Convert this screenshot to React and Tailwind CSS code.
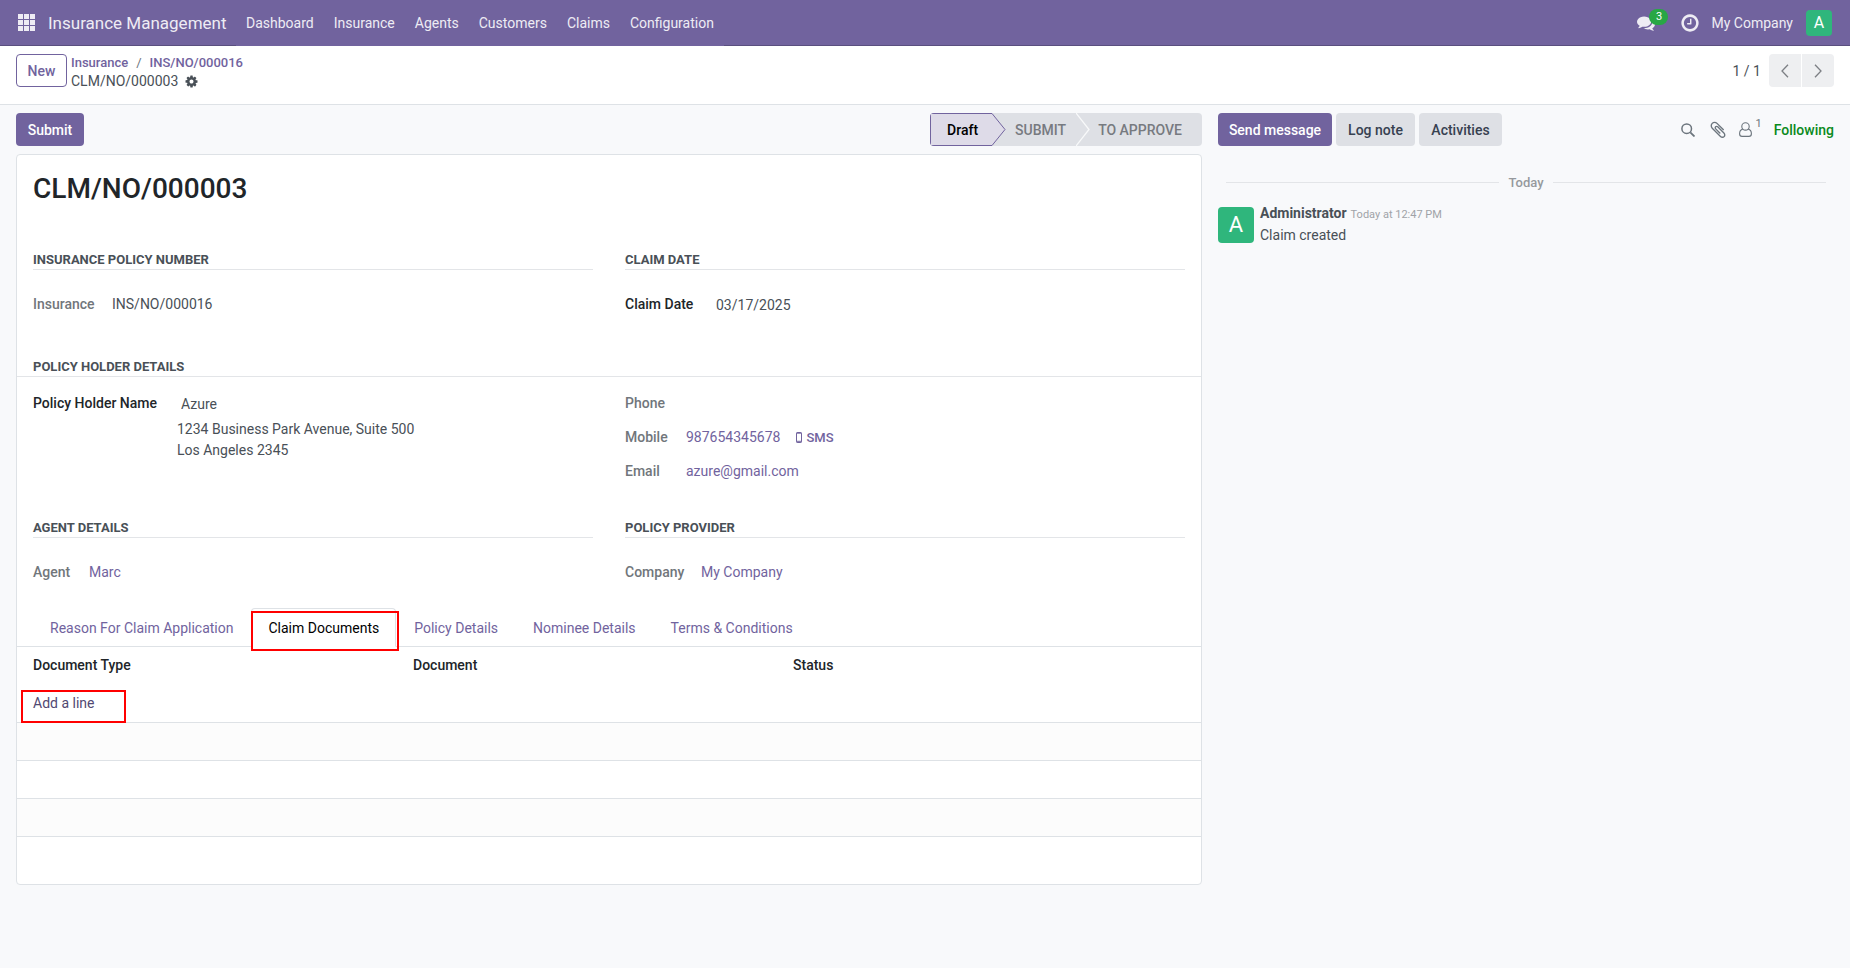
import clsx from "clsx";

const menus = ["Dashboard", "Insurance", "Agents", "Customers", "Claims", "Configuration"];

const tabs = [
  "Reason For Claim Application",
  "Claim Documents",
  "Policy Details",
  "Nominee Details",
  "Terms & Conditions",
];

// Icons
const AppsIcon = () => (
  <svg className="w-[17px] h-[17px]" viewBox="0 0 17 17" fill="currentColor">
    {[0, 6, 12].map((y) =>
      [0, 6, 12].map((x) => <rect key={`${x}-${y}`} x={x} y={y} width="5" height="5" />)
    )}
  </svg>
);

const CommentsIcon = () => (
  <svg className="w-[18px] h-[18px]" viewBox="0 0 1792 1792" fill="currentColor">
    <path d="M1408 768q0 139-94 257t-256.5 186.5T704 1280q-86 0-176-16-124 88-278 128-36 9-86 16h-3q-11 0-20.5-8t-11.5-21q-1-3-1-6.5t.5-6.5 2-6l2.5-5 3.5-5.5 4-5 4.5-5 4-4.5q5-6 23-25t26-29.5 22.5-29 25-38.5 20.5-44q-124-72-195-177T0 768q0-139 94-257t256.5-186.5T704 256t353.5 68.5T1314 511t94 257zm384 256q0 120-71 224.5t-195 176.5q10 24 20.5 44t25 38.5 22.5 29 26 29.5 23 25q1 1 4 4.5t4.5 5 4 5 3.5 5.5l2.5 5 2 6 .5 6.5-1 6.5q-3 14-13 22t-22 7q-50-7-86-16-154-40-278-128-90 16-176 16-271 0-472-132 58 4 88 4 161 0 309-45t264-129q125-92 192-212t67-254q0-77-23-152 129 71 204 178t75 230z" />
  </svg>
);

const ClockIcon = () => (
  <svg className="w-[18px] h-[18px]" viewBox="96 96 1600 1600" fill="currentColor">
    <path d="M1024 544v448q0 14-9 23t-23 9H672q-14 0-23-9t-9-23v-64q0-14 9-23t23-9h224V544q0-14 9-23t23-9h64q14 0 23 9t9 23zm416 352q0-148-73-273t-198-198-273-73-273 73-198 198-73 273 73 273 198 198 273 73 273-73 198-198 73-273zm224 0q0 209-103 385.5T1281.5 1561 896 1664t-385.5-103T231 1281.5 128 896t103-385.5T510.5 231 896 128t385.5 103T1561 510.5 1664 896z" />
  </svg>
);

const GearIcon = () => (
  <svg className="w-[13px] h-[13px]" viewBox="64 64 1664 1664" fill="currentColor">
    <path d="M1152 896q0-106-75-181t-181-75-181 75-75 181 75 181 181 75 181-75 75-181zm512-109v222q0 12-8 23t-20 13l-185 28q-19 54-39 91 35 50 107 138 10 12 10 25t-9 23q-27 37-99 108t-94 71q-12 0-26-9l-138-108q-44 23-91 38-16 136-29 186-7 28-36 28H785q-14 0-24.5-8.5T749 1634l-28-184q-49-16-90-37l-141 107q-10 9-25 9-14 0-25-11-126-114-165-168-7-10-7-23 0-12 8-23 15-21 51-66.5t54-70.5q-27-50-41-99l-183-27q-13-2-21-12.5t-8-23.5V783q0-12 8-23t19-13l186-28q14-46 39-92-40-57-107-138-10-12-10-24 0-10 9-23 26-36 98.5-107.5T465 263q13 0 26 10l138 107q44-23 91-38 16-136 29-186 7-28 36-28h222q14 0 24.5 8.5T1043 158l28 184q49 16 90 37l142-107q9-9 24-9 13 0 25 10 129 119 165 170 7 8 7 22 0 12-8 23-15 21-51 66.5t-54 70.5q26 50 41 98l183 28q13 2 21 12.5t8 23.5z" />
  </svg>
);

const ChevronIcon = ({ flip }) => (
  <svg
    className="w-[8px] h-[14px]"
    viewBox="0 0 8 14"
    fill="none"
    stroke="currentColor"
    strokeWidth="1.3"
  >
    <path d={flip ? "M1 .7 7 7l-6 6.3" : "M7 .7 1 7l6 6.3"} />
  </svg>
);

const SearchIcon = () => (
  <svg className="w-[14px] h-[14px]" viewBox="0 0 14 14" fill="none" stroke="currentColor">
    <circle cx="5.7" cy="5.7" r="4.8" strokeWidth="1.5" />
    <path d="m9.3 9.3 4.2 4.2" strokeWidth="1.8" />
  </svg>
);

const ClipIcon = () => (
  <svg className="w-[16px] h-[17px]" viewBox="0 0 1408 1600" fill="currentColor">
    <path
      transform="translate(0 -64)"
      d="M1404 1385q0 117-79 196t-196 79q-135 0-235-100L117 784Q4 669 4 513q0-159 110-270t269-111q158 0 273 113l605 606q10 10 10 22 0 16-30.5 46.5T1194 950q-13 0-23-10L565 333q-79-77-181-77-106 0-179 75t-73 181q0 105 76 181l776 777q63 63 145 63 64 0 106-42t42-106q0-82-63-145L633 659q-26-24-60-24-29 0-48 19t-19 48q0 32 25 59l410 410q10 10 10 22 0 16-31 47t-47 31q-12 0-22-10L441 851q-63-61-63-149 0-82 57-139t139-57q88 0 149 63l581 581q100 98 100 235z"
    />
  </svg>
);

const UserIcon = () => (
  <svg
    className="w-[13px] h-[15px]"
    viewBox="0 0 13 15"
    fill="none"
    stroke="currentColor"
    strokeWidth="1.1"
  >
    <circle cx="6.5" cy="4.4" r="3.7" />
    <path d="M3.8 7.1C1.6 7.6.6 9.3.6 11.7c0 1.6 1 2.7 2.4 2.7h7c1.4 0 2.4-1.1 2.4-2.7 0-2.4-1-4.1-3.2-4.6" />
  </svg>
);

const MobileIcon = () => (
  <svg className="w-[6px] h-[11px]" viewBox="0 0 6 11" fill="none" stroke="currentColor">
    <rect x=".5" y=".5" width="5" height="10" rx=".6" />
    <path d="M1 1.2h4M1 9.3h4" />
  </svg>
);

// Layout pieces
const Navbar = () => (
  <header className="flex h-[46px] items-center border-b border-[#5a4f7f] bg-[#71639e] text-[#eeecf4]">
    <button aria-label="Home menu" className="ml-[18px]">
      <AppsIcon />
    </button>
    <a href="#" className="ml-[13px] w-[188px] text-[17px] leading-6">
      Insurance Management
    </a>
    <nav className="-mb-px flex h-[46px] items-center bg-[#71639e] pt-px">
      {menus.map((item) => (
        <a key={item} href="#" className="px-[10px]">
          {item}
        </a>
      ))}
    </nav>
    <div className="ml-auto flex items-center pr-[18px]">
      <button aria-label="Messages" className="relative mr-[26px]">
        <CommentsIcon />
        <span className="absolute -top-[5px] left-[12px] flex h-4 w-[19px] items-center justify-center rounded-full bg-[#28a745] text-[11px] text-white">
          3
        </span>
      </button>
      <button aria-label="Activities" className="mr-3">
        <ClockIcon />
      </button>
      <button className="mr-[13px] pt-px">My Company</button>
      <button className="h-[26px] w-[26px] rounded bg-[#2fb67c] text-base leading-[26px] text-white">
        A
      </button>
    </div>
  </header>
);

const ControlPanel = () => (
  <div className="flex h-[59px] items-start border-b border-[#dee2e6] bg-white px-4 pt-2">
    <button className="h-[33px] w-[51px] rounded border border-[#71639e] pt-px font-medium text-[#71639e]">
      New
    </button>
    <div className="ml-1 leading-[18px]">
      <div className="flex text-[13px] font-medium text-[#71639e]">
        <a href="#">Insurance</a>
        <span className="px-2 font-normal text-[#6c757d]">/</span>
        <a href="#">INS/NO/000016</a>
      </div>
      <div className="flex items-center gap-[7px] text-[#495057]">
        <span>CLM/NO/000003</span>
        <button aria-label="Actions">
          <GearIcon />
        </button>
      </div>
    </div>
    <div className="ml-auto flex h-[33px] items-center">
      <span className="mr-2 pt-px">1 / 1</span>
      <button
        aria-label="Previous"
        className="mr-px flex h-[33px] w-8 items-center justify-center rounded-l bg-[#eeeff1] text-[#7c7f84]"
      >
        <ChevronIcon />
      </button>
      <button
        aria-label="Next"
        className="flex h-[33px] w-8 items-center justify-center rounded-r bg-[#eeeff1] text-[#7c7f84]"
      >
        <ChevronIcon flip />
      </button>
    </div>
  </div>
);

const StatusBar = () => (
  <div className="flex h-[33px] overflow-hidden rounded-sm bg-[#dee0e5] font-medium text-[#777a80]">
    <button className="relative w-[76px] pt-px pl-[17px] text-left text-black">
      <svg className="absolute inset-0 h-[33px] w-[76px]" viewBox="0 0 76 33">
        <path d="M.5.5H62L75 16.5 62 32.5H.5z" fill="#dedbe8" stroke="#71639e" />
      </svg>
      <span className="relative">Draft</span>
    </button>
    <button className="pt-px pr-[10px] pl-[9px]">SUBMIT</button>
    <svg className="h-[33px] w-[14px]" viewBox="0 0 14 33" fill="none" stroke="#f8f9fa">
      <path d="M0 0 13 16.5 0 33" strokeWidth="1.3" />
    </svg>
    <button className="pt-px pr-5 pl-2">TO APPROVE</button>
  </div>
);

const Heading = ({ children, className }) => (
  <h2
    className={clsx(
      "border-b border-[#e3e5e8] pt-px text-[13px] font-bold uppercase leading-[18px] text-[#495057]",
      className
    )}
  >
    {children}
  </h2>
);

const Label = ({ children, className, ...rest }) => (
  <label className={clsx("font-medium", className)} {...rest}>
    {children}
  </label>
);

const Notebook = () => (
  <div className="mt-[25px]">
    <div role="tablist" className="flex h-[39px] gap-px border-b border-[#dee2e6] pl-4">
      {tabs.map((tab) => {
        const active = tab === "Claim Documents";
        return (
          <button
            key={tab}
            role="tab"
            aria-selected={active}
            className={clsx(
              "relative h-[39px] border px-4 pt-px",
              active
                ? "rounded-t border-[#dee2e6] border-b-white bg-white text-black"
                : "border-transparent text-[#71639e]"
            )}
          >
            {tab}
            {active && (
              <span className="pointer-events-none absolute -left-px -right-1 top-[2px] h-10 border-2 border-[#ff0000]" />
            )}
          </button>
        );
      })}
    </div>
    <table className="w-full table-fixed text-left">
      <thead>
        <tr className="h-[37px] text-[#212529]">
          <th className="w-[336px] pl-4 font-medium">Document Type</th>
          <th className="w-[380px] pl-[60px] font-medium">Document</th>
          <th className="pl-[60px] font-medium">Status</th>
        </tr>
      </thead>
      <tbody>
        <tr className="h-[38px] border-b border-[#dee2e6]">
          <td colSpan="3" className="pt-px pl-4">
            <a href="#" className="relative text-[#514872]">
              Add a line
              <span className="pointer-events-none absolute -left-3 -top-[5px] h-[33px] w-[105px] border-2 border-[#ff0000]" />
            </a>
          </td>
        </tr>
        <tr className="h-[38px] border-b border-[#dee2e6] bg-[#fcfcfc]">
          <td colSpan="3"></td>
        </tr>
        <tr className="h-[38px] border-b border-[#dee2e6]">
          <td colSpan="3"></td>
        </tr>
        <tr className="h-[38px] border-b border-[#dee2e6] bg-[#fcfcfc]">
          <td colSpan="3"></td>
        </tr>
        <tr className="h-[38px]">
          <td colSpan="3"></td>
        </tr>
      </tbody>
    </table>
  </div>
);

const Sheet = () => (
  <section className="mt-2 rounded border border-[#dee2e6] bg-white pt-[17px] pb-[10px]">
    <h1 className="px-4 text-[28px] font-medium leading-[34px] text-[#212529]">CLM/NO/000003</h1>

    <div className="mt-11 grid grid-cols-2 gap-8 px-4">
      <div>
        <Heading>Insurance Policy Number</Heading>
        <div className="mt-6 flex gap-4">
          <Label className="w-[63px] text-[#71767b]">Insurance</Label>
          <span>INS/NO/000016</span>
        </div>
      </div>
      <div>
        <Heading>Claim Date</Heading>
        <div className="mt-6 flex gap-5">
          <Label htmlFor="claim_date" className="w-[71px] text-[#212529]">
            Claim Date
          </Label>
          <input id="claim_date" defaultValue="03/17/2025" className="w-40 pt-px outline-none" />
        </div>
      </div>
    </div>

    <Heading className="mt-[41px] px-4">Policy Holder Details</Heading>
    <div className="mt-4 grid grid-cols-2 gap-8 px-4">
      <div className="flex">
        <Label htmlFor="holder" className="w-36 text-[#212529]">
          Policy Holder Name
        </Label>
        <div>
          <input
            id="holder"
            defaultValue="Azure"
            className="mb-1 block w-60 px-1 pt-px outline-none"
          />
          <p>1234 Business Park Avenue, Suite 500</p>
          <p>Los Angeles 2345</p>
        </div>
      </div>
      <div className="flex flex-col gap-[13px]">
        <Label className="text-[#71767b]">Phone</Label>
        <div className="flex items-center">
          <Label className="w-[61px] text-[#71767b]">Mobile</Label>
          <a href="#" className="text-[#71639e]">
            987654345678
          </a>
          <button className="ml-4 flex items-center gap-1 text-[13px] font-medium text-[#71639e]">
            <MobileIcon />
            SMS
          </button>
        </div>
        <div className="flex">
          <Label className="w-[61px] text-[#71767b]">Email</Label>
          <a href="#" className="text-[#71639e]">
            azure@gmail.com
          </a>
        </div>
      </div>
    </div>

    <div className="mt-9 grid grid-cols-2 gap-8 px-4">
      <div>
        <Heading>Agent Details</Heading>
        <div className="mt-6 flex gap-4">
          <Label className="w-10 text-[#71767b]">Agent</Label>
          <a href="#" className="text-[#71639e]">
            Marc
          </a>
        </div>
      </div>
      <div>
        <Heading>Policy Provider</Heading>
        <div className="mt-6 flex gap-4">
          <Label className="w-[60px] text-[#71767b]">Company</Label>
          <a href="#" className="text-[#71639e]">
            My Company
          </a>
        </div>
      </div>
    </div>

    <Notebook />
  </section>
);

const Chatter = () => (
  <aside className="w-[648px] shrink-0 px-4 pt-2">
    <div className="flex h-[33px] items-center font-medium">
      <button className="mr-1 h-[33px] w-[114px] rounded bg-[#71639e] pt-px text-white">
        Send message
      </button>
      <button className="mr-1 h-[33px] w-[79px] rounded bg-[#dee0e5] pt-px text-[#374151]">
        Log note
      </button>
      <button className="h-[33px] w-[83px] rounded bg-[#dee0e5] pt-px text-[#374151]">
        Activities
      </button>
      <div className="ml-auto flex items-center text-[#6c757d]">
        <button aria-label="Search messages" className="mr-[15px]">
          <SearchIcon />
        </button>
        <button aria-label="Attach files" className="mr-[13px]">
          <ClipIcon />
        </button>
        <button aria-label="Followers" className="mr-3 flex items-center gap-1 font-normal">
          <UserIcon />
          <sup className="text-[11px]">1</sup>
        </button>
        <button className="pt-px text-[#0a8a1c]">Following</button>
      </div>
    </div>

    <div className="mx-2 mt-[26px] flex items-center gap-[9px] text-[13px] font-medium text-[#96999d]">
      <hr className="flex-1 border-[#e3e5e8]" />
      Today
      <hr className="flex-1 border-[#e3e5e8]" />
    </div>

    <div className="mt-[14px] flex gap-[6px]">
      <div className="h-9 w-9 rounded bg-[#2fb67c] text-center text-[22px] leading-9 text-white">
        A
      </div>
      <div className="-mt-1">
        <div className="flex items-baseline gap-1">
          <strong className="font-bold">Administrator</strong>
          <span className="text-[11px] text-[#a0a3a8]">Today at 12:47 PM</span>
        </div>
        <p>Claim created</p>
      </div>
    </div>
  </aside>
);

export default function App() {
  return (
    <div className="min-h-screen bg-[#f8f9fb] font-[Roboto,sans-serif] text-[14px] leading-[21px] text-[#495057]">
      <Navbar />
      <ControlPanel />
      <div className="flex">
        <main className="min-w-0 flex-1 pt-2 pl-4">
          <div className="flex justify-between">
            <button className="h-[33px] w-[68px] rounded bg-[#71639e] pt-px font-medium text-white">
              Submit
            </button>
            <StatusBar />
          </div>
          <Sheet />
        </main>
        <Chatter />
      </div>
    </div>
  );
}
